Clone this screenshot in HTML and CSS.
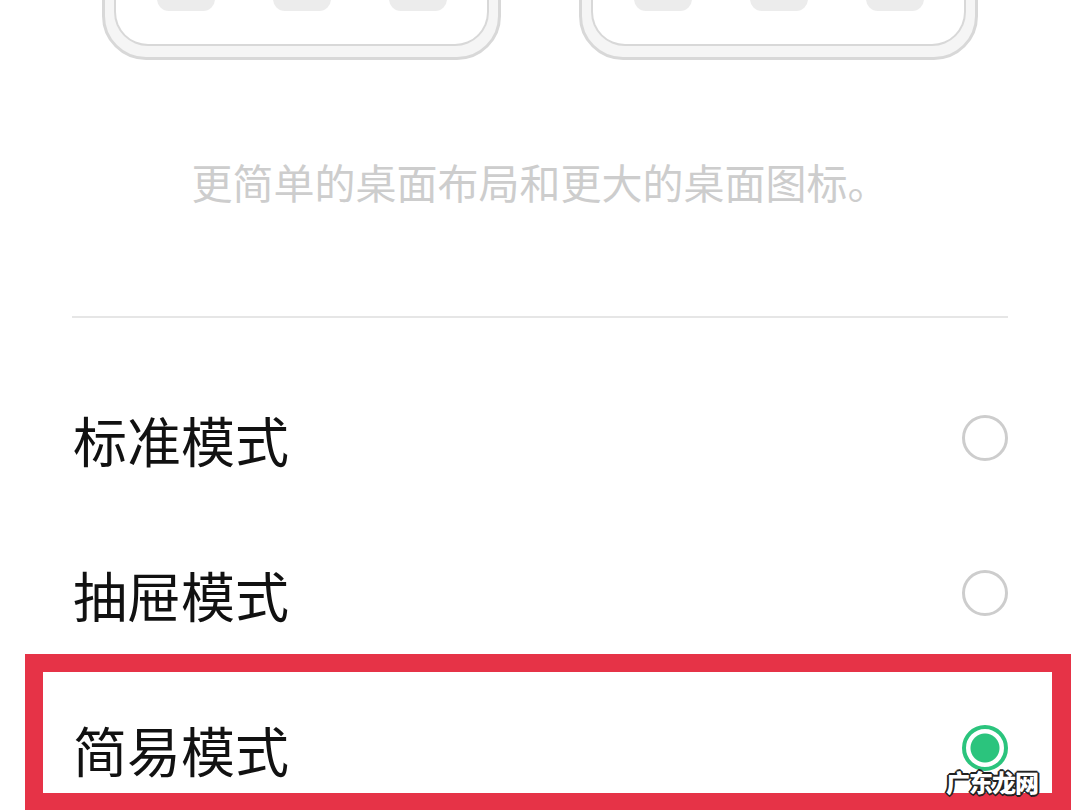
FILE: index.html
```html
<!DOCTYPE html>
<html lang="zh-CN">
<head>
  <meta charset="utf-8" />
  <meta name="viewport" content="width=device-width, initial-scale=1" />
  <title>桌面模式</title>
  <link rel="stylesheet" href="styles.css">
</head>
<body>
  <main class="screen">
    <!-- layout previews, scrolled partly out of view -->
    <div class="previews">
      <div class="phone">
        <div class="phone-screen">
          <span class="app"></span><span class="app"></span><span class="app"></span>
        </div>
      </div>
      <div class="phone">
        <div class="phone-screen">
          <span class="app"></span><span class="app"></span><span class="app"></span>
        </div>
      </div>
    </div>

    <p class="desc">更简单的桌面布局和更大的桌面图标。</p>

    <div class="options">
      <hr class="sep" />
      <label class="row">
        <span class="row-label">标准模式</span>
        <span class="radio"></span>
      </label>
      <label class="row">
        <span class="row-label">抽屉模式</span>
        <span class="radio"></span>
      </label>
      <label class="row is-marked">
        <span class="row-label">简易模式</span>
        <span class="radio is-on"></span>
      </label>
    </div>
  </main>

  <div class="watermark">广东龙网</div>
</body>
</html>
```

FILE: styles.css
```css
/* reset */
*,*::before,*::after{box-sizing:border-box;margin:0;padding:0;}

:root{
  --c-text:#111;
  --c-muted:#cdcdcd;
  --c-line:#e6e6e6;
  --c-frame:#d8d8d8;
  --c-green:#2bc47d;
  --c-red:#e63347;
}

html,body{width:1080px;height:810px;overflow:hidden;}

body{
  background:#fff;
  font-family:"Noto Sans CJK SC","Noto Sans",sans-serif;
  color:var(--c-text);
  position:relative;
}

.screen{display:flex;flex-direction:column;}

/* === previews === */
.previews{
  display:flex;
  justify-content:center;
  gap:78px;
  margin-top:-200px;
}
.phone{
  width:399px;
  height:260px;
  border:3px solid var(--c-frame);
  border-radius:0 0 44px 44px;
  background:#f5f5f5;
  padding:0 9px 11px;
}
.phone-screen{
  height:100%;
  border:2px solid var(--c-frame);
  border-top:none;
  border-radius:0 0 34px 34px;
  background:#fff;
  display:flex;
  justify-content:center;
  align-items:flex-end;
  gap:58px;
  padding-bottom:33px;
}
.app{
  width:58px;
  height:60px;
  border-radius:12px;
  background:#ececec;
}

/* === description === */
.desc{
  margin-top:93px;
  font-size:41px;
  line-height:56px;
  text-align:center;
  color:var(--c-muted);
}

/* === option list === */
.options{
  padding:0 72px;
  margin-top:107px;
}
.sep{
  border:none;
  height:2px;
  background:var(--c-line);
  margin-bottom:44px;
}
.row{
  position:relative;
  height:155px;
  display:flex;
  align-items:center;
  justify-content:space-between;
}
.row-label{
  font-size:54px;
  line-height:1;
  padding-left:1px;
}
.radio{
  width:46px;
  height:46px;
  border-radius:50%;
  border:3px solid var(--c-muted);
  margin-top:-4px;
}
.radio.is-on{
  border:4px solid var(--c-green);
  background:radial-gradient(circle,var(--c-green) 0 14px,#fff 15px);
}

/* annotation frame drawn over the selected row */
.row.is-marked::after{
  content:"";
  position:absolute;
  top:-18px;
  left:-47px;
  right:-63px;
  height:157px;
  border:18px solid var(--c-red);
  border-right-width:19px;
  pointer-events:none;
}

.watermark{
  position:absolute;
  left:946px;
  top:764px;
  font-size:24px;
  font-weight:900;
  letter-spacing:-1px;
  color:#fff;
  text-shadow:
    -2px 0 #222, 2px 0 #222, 0 -2px #222, 0 2px #222,
    -1px -1px #222, 1px 1px #222, -1px 1px #222, 1px -1px #222;
}
```
